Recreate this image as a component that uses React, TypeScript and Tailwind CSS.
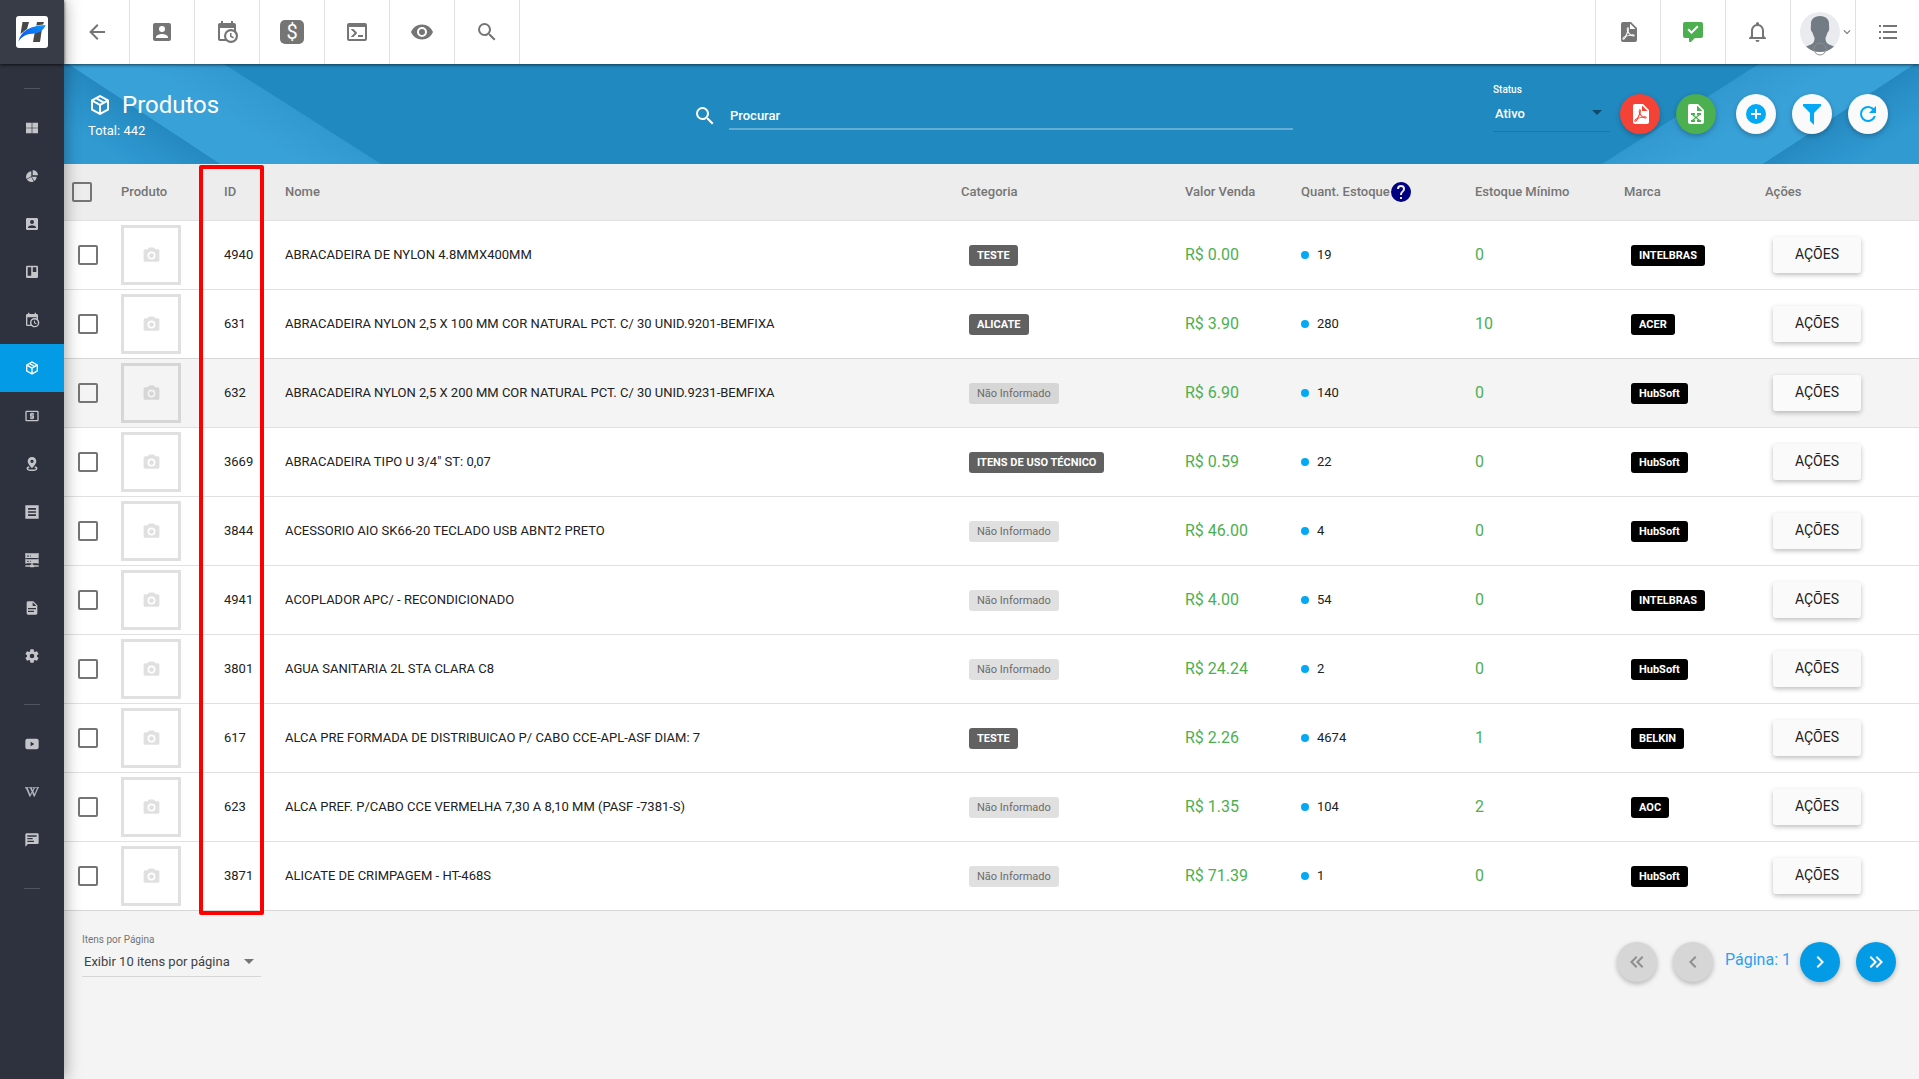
import React from "react";
import { FaWikipediaW } from "react-icons/fa";

const P = {
  back: "M20,11V13H8L13.5,18.5L12.08,19.92L4.16,12L12.08,4.08L13.5,5.5L8,11H20Z",
  account:
    "M6,17C6,15 10,13.9 12,13.9C14,13.9 18,15 18,17V18H6M15,9A3,3 0 0,1 12,12A3,3 0 0,1 9,9A3,3 0 0,1 12,6A3,3 0 0,1 15,9M3,5V19A2,2 0 0,0 5,21H19A2,2 0 0,0 21,19V5A2,2 0 0,0 19,3H5C3.89,3 3,3.9 3,5Z",
  calendar:
    "M15,13H16.5V15.82L18.94,17.23L18.19,18.53L15,16.69V13M19,8H5V19H9.67C9.24,18.09 9,17.07 9,16A7,7 0 0,1 16,9C17.07,9 18.09,9.24 19,9.67V8M5,21C3.89,21 3,20.1 3,19V5C3,3.89 3.89,3 5,3H6V1H8V3H16V1H18V3H19A2,2 0 0,1 21,5V11.1C22.24,12.36 23,14.09 23,16A7,7 0 0,1 16,23C14.09,23 12.36,22.24 11.1,21H5M16,11.15A4.85,4.85 0 0,0 11.15,16C11.15,18.68 13.32,20.85 16,20.85A4.85,4.85 0 0,0 20.85,16C20.85,13.32 18.68,11.15 16,11.15Z",
  console:
    "M20,19V7H4V19H20M20,3A2,2 0 0,1 22,5V19A2,2 0 0,1 20,21H4A2,2 0 0,1 2,19V5C2,3.89 2.9,3 4,3H20M13,17V15H18V17H13M9.58,13L5.57,9H8.4L11.7,12.3C12.09,12.69 12.09,13.33 11.7,13.72L8.42,17H5.59L9.58,13Z",
  eye: "M12,9A3,3 0 0,0 9,12A3,3 0 0,0 12,15A3,3 0 0,0 15,12A3,3 0 0,0 12,9M12,17A5,5 0 0,1 7,12A5,5 0 0,1 12,7A5,5 0 0,1 17,12A5,5 0 0,1 12,17M12,4.5C7,4.5 2.73,7.61 1,12C2.73,16.39 7,19.5 12,19.5C17,19.5 21.27,16.39 23,12C21.27,7.61 17,4.5 12,4.5Z",
  search:
    "M9.5,3A6.5,6.5 0 0,1 16,9.5C16,11.11 15.41,12.59 14.44,13.73L14.71,14H15.5L20.5,19L19,20.5L14,15.5V14.71L13.73,14.44C12.59,15.41 11.11,16 9.5,16A6.5,6.5 0 0,1 3,9.5A6.5,6.5 0 0,1 9.5,3M9.5,5C7,5 5,7 5,9.5C5,12 7,14 9.5,14C12,14 14,12 14,9.5C14,7 12,5 9.5,5Z",
  box: "M21,16.5C21,16.88 20.79,17.21 20.47,17.38L12.57,21.82C12.41,21.94 12.21,22 12,22C11.79,22 11.59,21.94 11.43,21.82L3.53,17.38C3.21,17.21 3,16.88 3,16.5V7.5C3,7.12 3.21,6.79 3.53,6.62L11.43,2.18C11.59,2.06 11.79,2 12,2C12.21,2 12.41,2.06 12.57,2.18L20.47,6.62C20.79,6.79 21,7.12 21,7.5V16.5M12,4.15L10.11,5.22L16,8.61L17.96,7.5L12,4.15M6.04,7.5L12,10.85L13.96,9.75L8.08,6.35L6.04,7.5M5,15.91L11,19.29V12.58L5,9.21V15.91M19,15.91V9.21L13,12.58V19.29L19,15.91Z",
  pdf: "M14,9H19.5L14,3.5V9M7,2H15L21,8V20A2,2 0 0,1 19,22H7C5.89,22 5,21.1 5,20V4A2,2 0 0,1 7,2M11.93,12.44C12.34,13.34 12.86,14.08 13.46,14.59L13.87,14.91C13,15.07 11.8,15.35 10.53,15.84V15.84L10.42,15.88L10.92,14.84C11.37,13.97 11.7,13.18 11.93,12.44M18.41,16.25C18.59,16.07 18.68,15.84 18.69,15.59C18.72,15.39 18.67,15.2 18.57,15.04C18.28,14.57 17.53,14.35 16.29,14.35L15,14.42L14.13,13.84C13.5,13.32 12.93,12.41 12.53,11.28L12.57,11.14C12.9,9.81 13.21,8.2 12.55,7.54C12.39,7.38 12.17,7.3 11.94,7.3H11.7C11.33,7.3 11,7.69 10.91,8.07C10.54,9.4 10.76,10.13 11.13,11.34V11.35C10.88,12.23 10.56,13.25 10.05,14.28L9.09,16.08L8.2,16.57C7,17.32 6.43,18.16 6.32,18.69C6.28,18.88 6.3,19.05 6.37,19.23L6.4,19.28L6.88,19.59L7.32,19.7C8.13,19.7 9.05,18.75 10.29,16.63L10.47,16.56C11.5,16.23 12.78,16 14.5,15.81C15.53,16.32 16.74,16.55 17.5,16.55C17.94,16.55 18.24,16.44 18.41,16.25M18,15.54L18.09,15.65C18.08,15.75 18.05,15.76 18,15.78H17.96L17.77,15.8C17.31,15.8 16.6,15.61 15.87,15.29C15.96,15.19 16,15.19 16.1,15.19C17.5,15.19 17.9,15.44 18,15.54M8.83,17C8.18,18.19 7.59,18.85 7.14,19C7.19,18.62 7.64,17.96 8.35,17.31L8.83,17M11.85,10.09C11.62,9.19 11.61,8.46 11.78,8.04L11.85,7.92L12,7.97C12.17,8.21 12.19,8.53 12.09,9.07L12.06,9.23L11.9,10.05L11.85,10.09Z",
  excel:
    "M13,9H18.5L13,3.5V9M6,2H14L20,8V20A2,2 0 0,1 18,22H6C4.89,22 4,21.1 4,20V4C4,2.89 4.89,2 6,2M17,11H13V13H14L12,14.67L10,13H11V11H7V13H8L11,15.5L8,18H7V20H11V18H10L12,16.33L14,18H13V20H17V18H16L13,15.5L16,13H17V11Z",
  chat: "M9,22A1,1 0 0,1 8,21V18H4A2,2 0 0,1 2,16V4C2,2.89 2.9,2 4,2H20A2,2 0 0,1 22,4V16A2,2 0 0,1 20,18H13.9L10.2,21.71C10,21.9 9.75,22 9.5,22V22H9M10.5,14L17.5,7L16.09,5.59L10.5,11.17L7.91,8.59L6.5,10L10.5,14Z",
  bell: "M16,17H7V10.5C7,8 9,6 11.5,6C14,6 16,8 16,10.5M18,16V10.5C18,7.43 15.86,4.86 13,4.18V3.5A1.5,1.5 0 0,0 11.5,2A1.5,1.5 0 0,0 10,3.5V4.18C7.13,4.86 5,7.43 5,10.5V16L3,18V19H20V18M11.5,22A2,2 0 0,0 13.5,20H9.5A2,2 0 0,0 11.5,22Z",
  list: "M3,5H5V7H3M7,5H21V7H7M3,11H5V13H3M7,11H21V13H7M3,17H5V19H3M7,17H21V19H7Z",
  plus: "M17,13H13V17H11V13H7V11H11V7H13V11H17M12,2A10,10 0 0,0 2,12A10,10 0 0,0 12,22A10,10 0 0,0 22,12A10,10 0 0,0 12,2Z",
  filter: "M3,2H21V4H20.92L14,10.92V22.91L10,18.91V10.91L3.09,4H3V2Z",
  refresh:
    "M17.65,6.35C16.2,4.9 14.21,4 12,4A8,8 0 0,0 4,12A8,8 0 0,0 12,20C15.73,20 18.84,17.45 19.73,14H17.65C16.83,16.33 14.61,18 12,18A6,6 0 0,1 6,12A6,6 0 0,1 12,6C13.66,6 15.14,6.69 16.22,7.78L13,11H20V4L17.65,6.35Z",
  help: "M15.07,11.25L14.17,12.17C13.45,12.89 13,13.5 13,15H11V14.5C11,13.39 11.45,12.39 12.17,11.67L13.41,10.41C13.78,10.05 14,9.55 14,9C14,7.89 13.1,7 12,7A2,2 0 0,0 10,9H8A4,4 0 0,1 12,5A4,4 0 0,1 16,9C16,9.88 15.64,10.67 15.07,11.25M13,19H11V17H13M12,2A10,10 0 0,0 2,12A10,10 0 0,0 12,22A10,10 0 0,0 22,12C22,6.47 17.5,2 12,2Z",
  grid: "M3,4H11.5V11.5H3M12.5,4H21V11.5H12.5M3,12.5H11.5V20H3M12.5,12.5H21V20H12.5Z",
  pie: "M21,11H13V3A8,8 0 0,1 21,11M19,13C19,15.78 17.58,18.23 15.43,19.67L11.58,13H19M11,21C8.22,21 5.77,19.58 4.33,17.43L10.82,13.68L14.56,20.17C13.5,20.7 12.28,21 11,21M3,13A8,8 0 0,1 11,5V12.42L3.83,16.56C3.3,15.5 3,14.28 3,13Z",
  board:
    "M5,2.5H19A2,2 0 0,1 21,4.5V19A2,2 0 0,1 19,21H5A2,2 0 0,1 3,19V4.5A2,2 0 0,1 5,2.5M5.5,5V17.5H10.8V5H5.5M13.2,5V12H18.5V5H13.2Z",
  cash: "M20,18H4V6H20M20,4H4C2.89,4 2,4.89 2,6V18A2,2 0 0,0 4,20H20A2,2 0 0,0 22,18V6C22,4.89 21.1,4 20,4M11,17H13V16H14A1,1 0 0,0 15,15V12A1,1 0 0,0 14,11H11V10H15V8H13V7H11V8H10A1,1 0 0,0 9,9V12A1,1 0 0,0 10,13H13V14H9V16H11V17Z",
  pin: "M12,1.5C15.9,1.5 18.5,4.5 18.5,8C18.5,12.2 12,18.5 12,18.5C12,18.5 5.5,12.2 5.5,8C5.5,4.5 8.1,1.5 12,1.5M12,5.5A2.5,2.5 0 0,0 12,10.5A2.5,2.5 0 0,0 12,5.5M7,15.5L8.6,17.2C7,17.7 6,18.4 6.4,19C7,19.9 9.5,20.4 12,20.4C14.5,20.4 17,19.9 17.6,19C18,18.4 17,17.7 15.4,17.2L17,15.5C19.5,16.4 20.5,17.8 20,19.4C19.3,21.5 16,22.6 12,22.6C8,22.6 4.7,21.5 4,19.4C3.5,17.8 4.5,16.4 7,15.5Z",
  article: "M2,2H22V22H2V2M6,6V8.5H18V6H6M6,11V13H18V11H6M6,15.5V18H18V15.5H6Z",
  server:
    "M13,19H14A1,1 0 0,1 15,20H22V22H15A1,1 0 0,1 14,23H10A1,1 0 0,1 9,22H2V20H9A1,1 0 0,1 10,19H11V17H4A1,1 0 0,1 2,16V12A1,1 0 0,1 4,11H20A1,1 0 0,1 22,12V16A1,1 0 0,1 20,17H13V19M4,2H20A1,1 0 0,1 22,4V8A1,1 0 0,1 20,9H4A1,1 0 0,1 2,8V4A1,1 0 0,1 4,2M9,7H10V5H9V7M9,15H10V13H9V15M5,5V7H7V5H5M5,13V15H7V13H5Z",
  doc: "M13,9H18.5L13,3.5V9M6,2H14L20,8V20A2,2 0 0,1 18,22H6C4.89,22 4,21.1 4,20V4C4,2.89 4.89,2 6,2M15,18V16H6V18H15M18,14V12H6V14H18Z",
  gear: "M12,15.5A3.5,3.5 0 0,1 8.5,12A3.5,3.5 0 0,1 12,8.5A3.5,3.5 0 0,1 15.5,12A3.5,3.5 0 0,1 12,15.5M19.43,12.97C19.47,12.65 19.5,12.33 19.5,12C19.5,11.67 19.47,11.34 19.43,11L21.54,9.37C21.73,9.22 21.78,8.95 21.66,8.73L19.66,5.27C19.54,5.05 19.27,4.96 19.05,5.05L16.56,6.05C16.04,5.66 15.5,5.32 14.87,5.07L14.5,2.42C14.46,2.18 14.25,2 14,2H10C9.75,2 9.54,2.18 9.5,2.42L9.13,5.07C8.5,5.32 7.96,5.66 7.44,6.05L4.95,5.05C4.73,4.96 4.46,5.05 4.34,5.27L2.34,8.73C2.21,8.95 2.27,9.22 2.46,9.37L4.57,11C4.53,11.34 4.5,11.67 4.5,12C4.5,12.33 4.53,12.65 4.57,12.97L2.46,14.63C2.27,14.78 2.21,15.05 2.34,15.27L4.34,18.73C4.46,18.95 4.73,19.03 4.95,18.95L7.44,17.94C7.96,18.34 8.5,18.68 9.13,18.93L9.5,21.58C9.54,21.82 9.75,22 10,22H14C14.25,22 14.46,21.82 14.5,21.58L14.87,18.93C15.5,18.67 16.04,18.34 16.56,17.94L19.05,18.95C19.27,19.03 19.54,18.95 19.66,18.73L21.66,15.27C21.78,15.05 21.73,14.78 21.54,14.63L19.43,12.97Z",
  video:
    "M5,4H19A3,3 0 0,1 22,7V17A3,3 0 0,1 19,20H5A3,3 0 0,1 2,17V7A3,3 0 0,1 5,4M10,8.5V15.5L15.5,12L10,8.5Z",
  message:
    "M20,2A2,2 0 0,1 22,4V16A2,2 0 0,1 20,18H6L2,22V4C2,2.89 2.9,2 4,2H20M5,5V7H19V5H5M5,9V11H13V9H5M5,13V15H15V13H5Z",
  camera:
    "M4,4H7L9,2H15L17,4H20A2,2 0 0,1 22,6V18A2,2 0 0,1 20,20H4A2,2 0 0,1 2,18V6A2,2 0 0,1 4,4M12,7A5,5 0 0,0 7,12A5,5 0 0,0 12,17A5,5 0 0,0 17,12A5,5 0 0,0 12,7M12,9A3,3 0 0,1 15,12A3,3 0 0,1 12,15A3,3 0 0,1 9,12A3,3 0 0,1 12,9Z",
  first:
    "M18.41,7.41L17,6L11,12L17,18L18.41,16.59L13.83,12L18.41,7.41M12.41,7.41L11,6L5,12L11,18L12.41,16.59L7.83,12L12.41,7.41Z",
  prev: "M15.41,16.58L10.83,12L15.41,7.41L14,6L8,12L14,18L15.41,16.58Z",
  next: "M8.59,16.58L13.17,12L8.59,7.41L10,6L16,12L10,18L8.59,16.58Z",
  last: "M5.59,7.41L7,6L13,12L7,18L5.59,16.59L10.17,12L5.59,7.41M11.59,7.41L13,6L19,12L13,18L11.59,16.59L16.17,12L11.59,7.41Z",
  down: "M7.41,8.58L12,13.17L16.59,8.58L18,10L12,16L6,10L7.41,8.58Z",
};

function Icon({ d, className = "size-6" }: { d: string; className?: string }) {
  return (
    <svg viewBox="0 0 24 24" className={className} fill="currentColor" fillRule="evenodd" aria-hidden="true">
      <path d={d} />
    </svg>
  );
}

function Logo() {
  return (
    <svg viewBox="0 0 32 32" className="size-8" aria-hidden="true">
      <defs>
        <linearGradient id="swoosh" x1="0" y1="1" x2="1" y2="0">
          <stop offset="0" stopColor="#0a4bf0" />
          <stop offset="1" stopColor="#0f97f5" />
        </linearGradient>
      </defs>
      <rect width="32" height="32" rx="3" fill="#fff" />
      <path d="M6.500 6H13L11 13L4.500 18Z" fill="#484848" />
      <path d="M21 6H28L27 8.500L20.300 9.500Z" fill="#484848" />
      <path d="M18.500 17.500L25.800 14L24 26H17Z" fill="#484848" />
      <path d="M2.500 25.500C5 16 12 10 29.500 9C28 14 24 17 16 17.800C9 18.500 5.500 21 2.500 25.500Z" fill="url(#swoosh)" />
    </svg>
  );
}

type NavItem = { label: string; d?: string; active?: boolean };

const mainNav: NavItem[] = [
  { label: "Painel", d: P.grid },
  { label: "Gráficos", d: P.pie },
  { label: "Clientes", d: P.account },
  { label: "Quadros", d: P.board },
  { label: "Agenda", d: P.calendar },
  { label: "Estoque", d: P.box, active: true },
  { label: "Financeiro", d: P.cash },
  { label: "Mapa", d: P.pin },
  { label: "Notas", d: P.article },
  { label: "Rede", d: P.server },
  { label: "Relatórios", d: P.doc },
  { label: "Configurações", d: P.gear },
];

const helpNav: NavItem[] = [
  { label: "Vídeos", d: P.video },
  { label: "Wiki" },
  { label: "Mensagens", d: P.message },
];

function NavLink({ item }: { item: NavItem }) {
  return (
    <a
      href="#"
      aria-label={item.label}
      className={
        item.active
          ? "flex h-12 items-center justify-center bg-[#039be5] text-white"
          : "flex h-12 items-center justify-center text-[#c3c5c9]"
      }
    >
      {item.d ? <Icon d={item.d} className="size-4" /> : <FaWikipediaW className="size-[14px]" stroke="currentColor" strokeWidth={20} />}
    </a>
  );
}

function NavDivider() {
  return (
    <div className="flex h-10 justify-center pt-6">
      <div className="h-px w-4 bg-[#50545f]" />
    </div>
  );
}

function Sidebar() {
  return (
    <nav className="relative z-20 w-16 shrink-0 bg-[#2d323e] shadow-[0_0_16px_rgba(0,0,0,0.4)]">
      <div className="flex h-16 items-center justify-center bg-[#373c47] shadow-[0_1px_3px_rgba(0,0,0,0.7)]">
        <a href="#" aria-label="Início">
          <Logo />
        </a>
      </div>
      <NavDivider />
      {mainNav.map((i) => (
        <NavLink key={i.label} item={i} />
      ))}
      <NavDivider />
      {helpNav.map((i) => (
        <NavLink key={i.label} item={i} />
      ))}
      <NavDivider />
    </nav>
  );
}

function Avatar() {
  return (
    <svg viewBox="0 0 40 46" className="h-[46px] w-10" aria-hidden="true">
      <circle cx="20" cy="20" r="20" fill="#e9ebee" />
      <path
        d="M20 4C26 4 29.5 7.500 29 13C29 15 29.500 15.500 29 18C28.500 20 27.500 20 27 22C26.600 24 25.500 25 25.500 26C25.500 29 26 31 29 32.500L34 34.500Q28 40 20 40Q12 40 6 34.500L11 32.500C14 31 14.500 29 14.500 26C14.500 25 13.400 24 13 22C12.500 20 11.500 20 11 18C10.500 15.500 11 15 11 13C10.500 7.500 14 4 20 4Z"
        fill="#737b84"
      />
      <circle cx="20" cy="37" r="6" fill="none" stroke="#8d8d8d" />
    </svg>
  );
}

const leftTools = [
  { label: "Voltar", d: P.back },
  { label: "Clientes", d: P.account },
  { label: "Agenda", d: P.calendar },
  { label: "Financeiro" },
  { label: "Console", d: P.console },
  { label: "Visualizar", d: P.eye },
  { label: "Pesquisar", d: P.search },
];

function TopBar() {
  return (
    <header className="relative z-10 flex h-16 justify-between bg-white text-[#757575] shadow-[0_1px_3px_rgba(0,0,0,0.6)]">
      <div className="flex pl-px">
        {leftTools.map((t) => (
          <button
            key={t.label}
            aria-label={t.label}
            className="flex w-[65px] items-center justify-center border-r border-[#e0e0e0]"
          >
            {t.d ? (
              <Icon d={t.d} />
            ) : (
              <span className="flex size-6 items-center justify-center rounded-[5px] bg-[#757575] text-xl text-white">
                $
              </span>
            )}
          </button>
        ))}
      </div>
      <div className="flex">
        <button aria-label="Relatórios PDF" className="flex w-[65px] items-center justify-center border-l border-[#e0e0e0]">
          <Icon d={P.pdf} />
        </button>
        <button
          aria-label="Mensagens"
          className="flex w-[65px] items-center justify-center border-l border-[#e0e0e0] text-[#4caf50]"
        >
          <Icon d={P.chat} />
        </button>
        <button aria-label="Notificações" className="flex w-[65px] items-center justify-center border-l border-[#e0e0e0]">
          <Icon d={P.bell} />
        </button>
        <button aria-label="Perfil" className="flex w-[65px] items-start border-l border-[#e0e0e0] pt-3 pl-[9px]">
          <Avatar />
          <Icon d={P.down} className="mt-[13px] size-[14px]" />
        </button>
        <button aria-label="Menu rápido" className="flex w-16 items-center justify-center border-l border-[#e0e0e0]">
          <Icon d={P.list} />
        </button>
      </div>
    </header>
  );
}

function Rays({ id, className }: { id: string; className: string }) {
  return (
    <svg viewBox="0 0 320 100" className={className} aria-hidden="true">
      <defs>
        <linearGradient id={id + "a"} gradientUnits="userSpaceOnUse" x1="80" y1="50" x2="52" y2="94">
          <stop offset="0" stopColor="#2589c0" />
          <stop offset="0.5" stopColor="#2b92ca" />
          <stop offset="1" stopColor="#309ad1" />
        </linearGradient>
        <linearGradient id={id + "b"} gradientUnits="userSpaceOnUse" x1="238" y1="50" x2="214" y2="88">
          <stop offset="0" stopColor="#3299d0" />
          <stop offset="1" stopColor="#38a1d8" />
        </linearGradient>
      </defs>
      <path d="M4 0H160L317 100H156Z" fill={"url(#" + id + "b)"} />
      <path d="M0 0H4L156 100H0Z" fill={"url(#" + id + "a)"} />
    </svg>
  );
}

function Round({ label, d, className }: { label: string; d: string; className: string }) {
  return (
    <button
      aria-label={label}
      className={"flex size-10 items-center justify-center rounded-full shadow-[0_2px_5px_rgba(0,0,0,0.26)] " + className}
    >
      <Icon d={d} />
    </button>
  );
}

function Arrow({ className }: { className: string }) {
  return (
    <svg viewBox="0 0 10 5" className={"pointer-events-none absolute h-[5px] w-[10px] " + className} aria-hidden="true">
      <path d="M0 0H10L5 5Z" fill="currentColor" />
    </svg>
  );
}

function Banner() {
  return (
    <div className="relative flex h-[100px] items-center justify-between bg-[#2089bf] pr-[31px] pl-6 text-white">
      <Rays id="l" className="absolute top-0 left-0 h-[100px] w-80" />
      <Rays id="r" className="absolute top-0 right-0 h-[100px] w-80 -scale-x-100" />
      <div className="relative w-[605px] pt-[2px]">
        <h1 className="flex items-center gap-[10px] text-2xl leading-8">
          <Icon d={P.box} />
          Produtos
        </h1>
        <p className="text-[13px] leading-5">Total: 442</p>
      </div>
      <label className="relative mr-auto flex w-[600px] items-center gap-3 pt-1">
        <Icon d={P.search} />
        <input
          type="text"
          placeholder="Procurar"
          className="h-7 flex-1 border-b-2 border-white/30 bg-transparent pl-px text-[13px] font-medium text-white outline-none placeholder:text-white"
        />
      </label>
      <div className="relative flex items-center">
        <div className="relative mr-[10px] flex w-[117px] flex-col pb-3">
          <label htmlFor="status" className="text-[10px] leading-3 font-medium">
            Status
          </label>
          <select
            id="status"
            className="mt-1 h-8 appearance-none border-b border-black/12 bg-transparent pb-1 pl-[2px] text-[13px] font-medium outline-none"
          >
            <option>Ativo</option>
          </select>
          <Arrow className="right-2 bottom-[29px] text-[#0f4a6b]" />
        </div>
        <div className="flex gap-4">
          <Round label="Exportar PDF" d={P.pdf} className="bg-[#f44336]" />
          <Round label="Exportar Excel" d={P.excel} className="mr-1 bg-[#4caf50]" />
          <Round label="Adicionar" d={P.plus} className="bg-[#fafafa] text-[#03a9f4]" />
          <Round label="Filtrar" d={P.filter} className="bg-[#fafafa] text-[#03a9f4]" />
          <Round label="Atualizar" d={P.refresh} className="bg-[#fafafa] text-[#03a9f4]" />
        </div>
      </div>
    </div>
  );
}

const NI = "Não Informado";
type Row = [id: string, nome: string, categoria: string, valor: string, quant: string, minimo: string, marca: string];
const rows: Row[] = [
  ["4940", "ABRACADEIRA DE NYLON 4.8MMX400MM", "TESTE", "0.00", "19", "0", "INTELBRAS"],
  ["631", "ABRACADEIRA NYLON 2,5 X 100 MM COR NATURAL PCT. C/ 30 UNID.9201-BEMFIXA", "ALICATE", "3.90", "280", "10", "ACER"],
  ["632", "ABRACADEIRA NYLON 2,5 X 200 MM COR NATURAL PCT. C/ 30 UNID.9231-BEMFIXA", NI, "6.90", "140", "0", "HubSoft"],
  ["3669", "ABRACADEIRA TIPO U 3/4\" ST: 0,07", "ITENS DE USO TÉCNICO", "0.59", "22", "0", "HubSoft"],
  ["3844", "ACESSORIO AIO SK66-20 TECLADO USB ABNT2 PRETO", NI, "46.00", "4", "0", "HubSoft"],
  ["4941", "ACOPLADOR APC/ - RECONDICIONADO", NI, "4.00", "54", "0", "INTELBRAS"],
  ["3801", "AGUA SANITARIA 2L STA CLARA C8", NI, "24.24", "2", "0", "HubSoft"],
  ["617", "ALCA PRE FORMADA DE DISTRIBUICAO P/ CABO CCE-APL-ASF DIAM: 7", "TESTE", "2.26", "4674", "1", "BELKIN"],
  ["623", "ALCA PREF. P/CABO CCE VERMELHA 7,30 A 8,10 MM (PASF -7381-S)", NI, "1.35", "104", "2", "AOC"],
  ["3871", "ALICATE DE CRIMPAGEM - HT-468S", NI, "71.39", "1", "0", "HubSoft"],
];

function Badge({ text, className }: { text: string; className: string }) {
  return (
    <span className={"mt-px block h-[21px] w-fit rounded-[3px] px-2 text-[11px] leading-[21px] whitespace-nowrap " + className}>
      {text}
    </span>
  );
}

function Check({ label, className }: { label: string; className: string }) {
  return (
    <input
      type="checkbox"
      aria-label={label}
      className={"block size-5 appearance-none rounded-[2px] border-2 border-[#757575] " + className}
    />
  );
}

function ProductTable() {
  return (
    <div className="relative">
      <table className="w-full table-fixed border-collapse text-left text-[13px] text-[#212121]">
        <colgroup>
          <col className="w-[57px]" />
          <col className="w-[103px]" />
          <col className="w-[61px]" />
          <col />
          <col className="w-[224px]" />
          <col className="w-[116px]" />
          <col className="w-[174px]" />
          <col className="w-[149px]" />
          <col className="w-[141px]" />
          <col className="w-[154px]" />
        </colgroup>
        <thead className="bg-[#ededed] text-[#757575]">
          <tr className="h-14 *:font-medium">
            <th>
              <Check label="Selecionar todos" className="ml-2" />
            </th>
            <th>Produto</th>
            <th>ID</th>
            <th>Nome</th>
            <th>Categoria</th>
            <th>Valor Venda</th>
            <th>
              <span className="flex items-center whitespace-nowrap">
                Quant. Estoque
                <Icon d={P.help} className="-ml-px size-6 text-[#000080]" />
              </span>
            </th>
            <th>Estoque Mínimo</th>
            <th>Marca</th>
            <th>Ações</th>
          </tr>
        </thead>
        <tbody>
          {rows.map(([id, nome, categoria, valor, quant, minimo, marca], i) => (
            <tr
              key={id}
              className={"h-[69px] border-t border-black/12 last:border-b " + (i === 2 ? "bg-[#f4f4f4]" : "bg-white")}
            >
              <td>
                <Check label={"Selecionar " + nome} className="ml-[14px]" />
              </td>
              <td>
                <div className="flex size-[60px] items-center justify-center border-3 border-black/12 text-black/12">
                  <Icon d={P.camera} className="mt-px size-[19px]" />
                </div>
              </td>
              <td>{id}</td>
              <td>
                <p className="truncate">{nome}</p>
              </td>
              <td className="pl-2">
                <Badge
                  text={categoria}
                  className={categoria === NI ? "bg-black/12 text-[#6b6b6b]" : "bg-[#616161] font-bold text-white"}
                />
              </td>
              <td className="text-base text-[#4caf50]">R$ {valor}</td>
              <td>
                <span className="flex items-center gap-2">
                  <span className="size-2 rounded-full bg-[#03a9f4]" />
                  {quant}
                </span>
              </td>
              <td className="text-base text-[#4caf50]">{minimo}</td>
              <td className="pl-[7px]">
                <Badge text={marca} className="bg-black font-bold text-white" />
              </td>
              <td>
                <button className="ml-2 block h-9 w-[88px] rounded-[3px] bg-[#fafafa] pb-px text-sm shadow-[0_2px_5px_rgba(0,0,0,0.26)]">
                  AÇÕES
                </button>
              </td>
            </tr>
          ))}
        </tbody>
      </table>
      <div className="pointer-events-none absolute top-px -bottom-1 left-[135px] w-[65px] rounded-[2px] border-4 border-[#ff0000]" />
    </div>
  );
}

function Footer() {
  return (
    <footer className="flex items-start justify-between pt-[23px] pr-[23px] pl-[18px]">
      <div className="relative flex w-[179px] flex-col">
        <label htmlFor="page-size" className="text-[10px] leading-3 text-[#757575]">
          Itens por Página
        </label>
        <select
          id="page-size"
          className="mt-px h-[30px] appearance-none border-b border-black/12 bg-transparent pt-[2px] pl-[2px] text-[13px] text-[#424242] outline-none"
        >
          <option>Exibir 10 itens por página</option>
        </select>
        <Arrow className="right-[7px] bottom-[13px] text-[#757575]" />
      </div>
      <div className="flex items-center pt-2">
        <Round label="Primeira página" d={P.first} className="mr-4 bg-[#d6d6d6] text-[#8e8e8e]" />
        <Round label="Página anterior" d={P.prev} className="mr-3 bg-[#d6d6d6] text-[#8e8e8e]" />
        <span className="mr-[9px] pb-1 text-base text-[#2f9ff0]">Página: 1</span>
        <Round label="Próxima página" d={P.next} className="mr-4 bg-[#039be5] text-white" />
        <Round label="Última página" d={P.last} className="bg-[#039be5] text-white" />
      </div>
    </footer>
  );
}

export default function App() {
  return (
    <div className="flex min-h-screen bg-[#f4f4f4] font-[Roboto,sans-serif]">
      <Sidebar />
      <main className="min-w-0 flex-1">
        <TopBar />
        <Banner />
        <ProductTable />
        <Footer />
      </main>
    </div>
  );
}
